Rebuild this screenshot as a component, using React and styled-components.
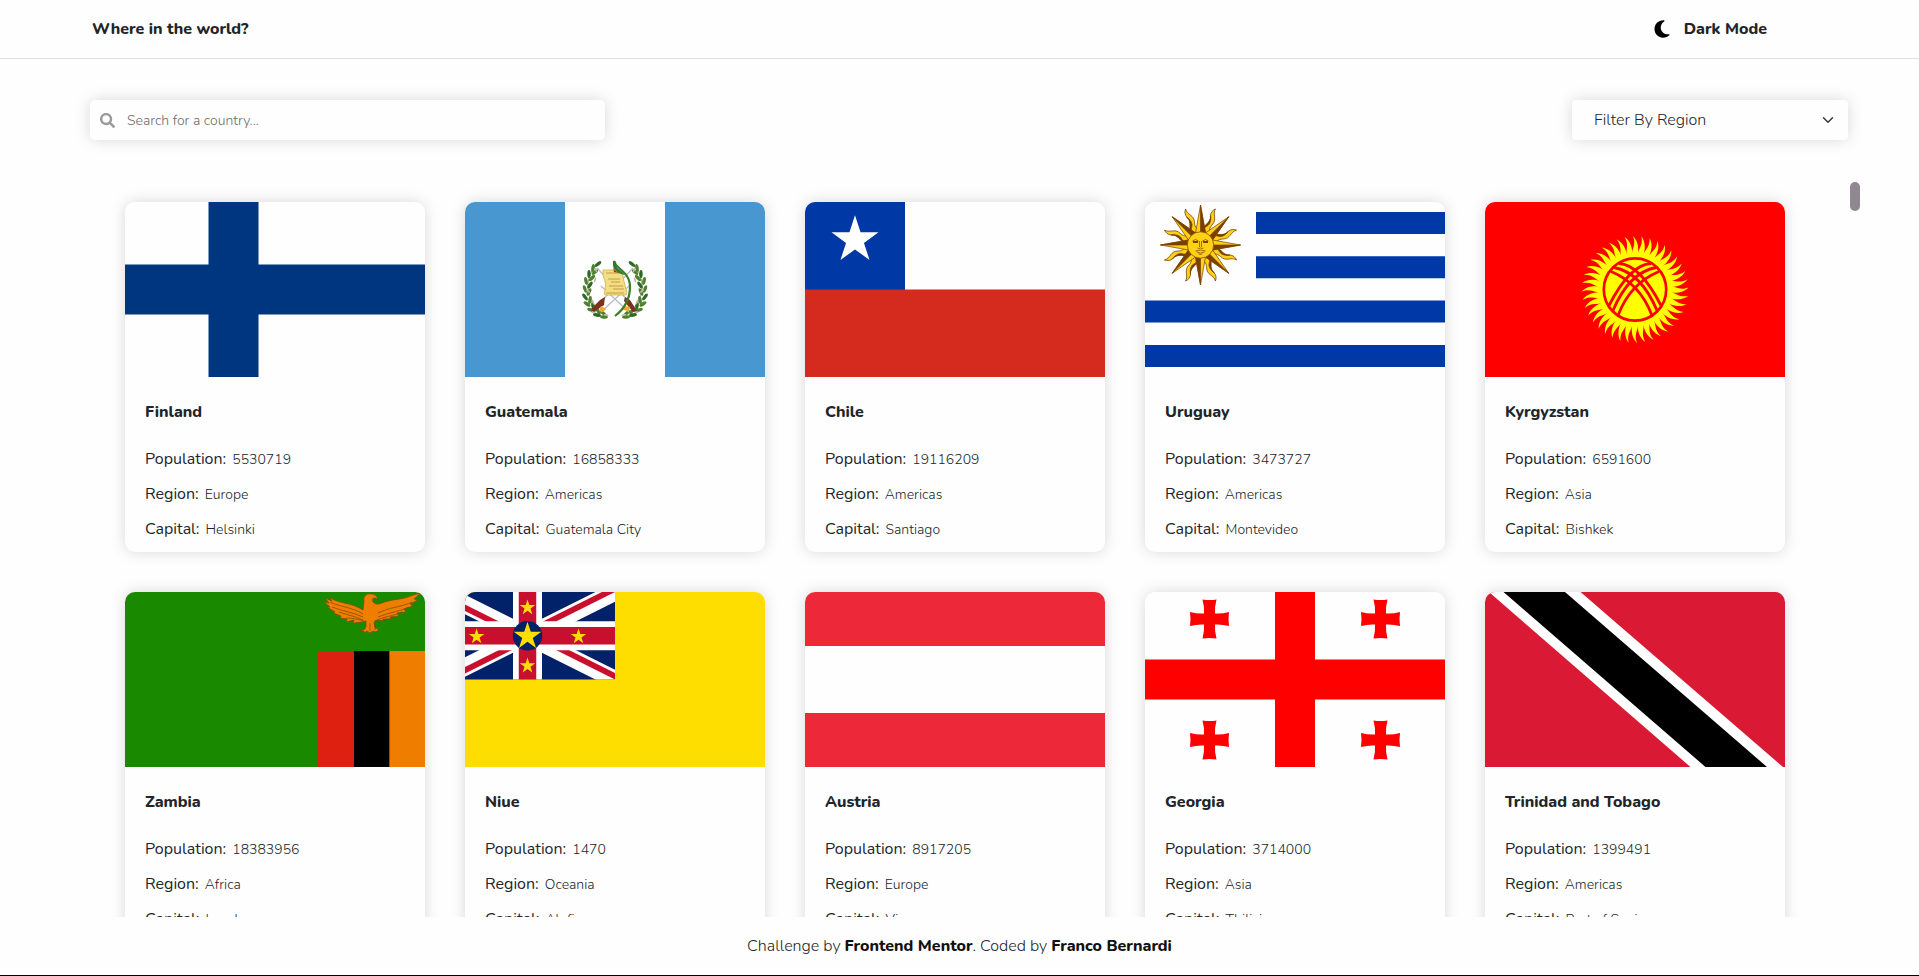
import React from "react";
import styled, { createGlobalStyle } from "styled-components";
import { FaMoon } from "react-icons/fa6";
import { FaSearch } from "react-icons/fa";

const GlobalStyle = createGlobalStyle`
  *, *::before, *::after { box-sizing: border-box; }
  body {
    margin: 0;
    background: #fefefe;
    color: #212529;
    font-family: "Nunito", "Open Sans", sans-serif;
    font-size: 16px;
    font-weight: 300;
  }
  button, input, select { font: inherit; color: inherit; }
`;

const shadow = "0 0 15px rgba(0, 0, 0, 0.15)";

const Page = styled.div`
  display: flex;
  flex-direction: column;
  height: 100vh;
  border-bottom: 1px solid #000;
`;

const Header = styled.header`
  display: flex;
  align-items: center;
  justify-content: space-between;
  height: 59px;
  flex-shrink: 0;
  padding: 0 152px 0 92px;
  border-bottom: 1px solid #dee2e6;
`;

const Brand = styled.h1`
  margin: 0;
  font-size: 16px;
  font-weight: 800;
`;

const ThemeButton = styled.button`
  display: flex;
  align-items: center;
  gap: 12px;
  padding: 0;
  border: 0;
  background: none;
  font-weight: 800;
  cursor: pointer;

  svg { color: #000; }
`;

const Controls = styled.div`
  display: flex;
  justify-content: space-between;
  flex-shrink: 0;
  padding: 41px 71px 42px 90px;
`;

const SearchBox = styled.label`
  display: flex;
  align-items: center;
  gap: 12px;
  width: 515px;
  height: 40px;
  padding: 0 10px;
  border-radius: 5px;
  background: #fefefe;
  box-shadow: ${shadow};
  color: #999;
`;

const SearchInput = styled.input`
  flex: 1;
  min-width: 0;
  padding: 0;
  border: 0;
  outline: 0;
  background: transparent;
  font-size: 14px;
  color: #212529;

  &::placeholder { color: #6c6c6c; opacity: 1; }
`;

const SelectBox = styled.div`
  position: relative;
  width: 276px;

  svg {
    position: absolute;
    top: 14px;
    right: 14px;
    pointer-events: none;
  }
`;

const RegionSelect = styled.select`
  width: 100%;
  height: 40px;
  padding: 0 36px 0 22px;
  border: 0;
  border-radius: 4px;
  appearance: none;
  background: #fefefe;
  box-shadow: ${shadow};
`;

const ScrollArea = styled.main`
  display: flex;
  flex: 1;
  min-height: 0;
  padding: 0 59px 0 60px;
`;

const CardGrid = styled.div`
  display: grid;
  grid-template-columns: repeat(auto-fill, 300px);
  grid-auto-rows: max-content;
  justify-content: center;
  gap: 40px;
  flex: 1;
  padding-top: 20px;
  overflow: hidden;
`;

const ScrollTrack = styled.div`
  width: 10px;
`;

const ScrollThumb = styled.div`
  height: 29px;
  border-radius: 5px;
  background: #8f8891;
`;

const Card = styled.article`
  border-radius: 10px;
  overflow: hidden;
  background: #fefefe;
  box-shadow: ${shadow};
`;

const Flag = styled.svg`
  display: block;
  width: 100%;
  height: 175px;
`;

const CardBody = styled.div`
  padding: 20px 20px 5px;
`;

const CountryName = styled.h2`
  margin: 0 0 15px;
  font-size: 16px;
  line-height: 30px;
  font-weight: 800;
`;

const Facts = styled.dl`
  margin: 0;
`;

const Fact = styled.div`
  display: flex;
  align-items: baseline;
  gap: 6px;
  line-height: 35px;

  dt { font-weight: 400; }
  dd { margin: 0; font-size: 14px; }
`;

const Footer = styled.footer`
  flex-shrink: 0;
  line-height: 58px;
  text-align: center;

  a {
    color: #111;
    font-weight: 800;
    text-decoration: none;
  }
`;

const starPoints = (cx, cy, r) =>
  Array.from({ length: 10 }, (_, i) => {
    const radius = i % 2 ? r * 0.382 : r;
    const a = (i * Math.PI) / 5;
    return `${(cx + radius * Math.sin(a)).toFixed(2)},${(cy - radius * Math.cos(a)).toFixed(2)}`;
  }).join(" ");

const turns = (n, offset = 0) => Array.from({ length: n }, (_, i) => (i * 360) / n + offset);

const Finland = () => (
  <>
    <path fill="#fefefe" d="M0 0h300v175H0z" />
    <path fill="#003580" d="M83.5 0h50v62.5H300v50H133.5V175h-50v-62.5H0v-50h83.5z" />
  </>
);

const laurelLeaves = [
  [-17, -25, 50], [-22, -21, 10], [-20, -17, 50], [-26, -15, 0], [-23, -11, 45],
  [-29, -8, -12], [-25, -4, 35], [-30, 0, -20], [-26, 3, 25], [-30, 8, -38],
  [-25, 11, 10], [-28, 15, -55], [-22, 17, -10], [-24, 21, -70], [-17, 22, -30],
  [-18, 26, -80], [-12, 24, -50], [-11, 28, -85],
];

const Laurel = () => (
  <g>
    <path d="M-17-26C-31-13-32 13-10 26" fill="none" stroke="#9a9b72" strokeWidth="1" />
    {laurelLeaves.map(([x, y, a], i) => (
      <ellipse key={i} rx="1.7" ry="4" fill={i % 3 ? "#4e8030" : "#2f6a25"} transform={`translate(${x} ${y}) rotate(${a})`} />
    ))}
    {laurelLeaves.filter((_, i) => i % 3 === 1).map(([x, y, a], i) => (
      <ellipse key={i} rx="0.9" ry="2.6" fill="#c3bba3" transform={`translate(${x + 3} ${y + 2}) rotate(${a - 30})`} />
    ))}
  </g>
);

const Guatemala = () => (
  <>
    <path fill="#4997d0" d="M0 0h300v175H0z" />
    <path fill="#fefefe" d="M100 0h100v175H100z" />
    <g transform="translate(150 87)">
      <Laurel />
      <g transform="scale(-1 1)"><Laurel /></g>
      <path d="M-18-21L20 19M18-21L-20 19M-14-3L14 23M14-3L-14 23" stroke="#b9bcc4" strokeWidth="1.2" />
      <path d="M-10 8l-5 3-9 9 3 3 10-7zM10 8l5 3 7 11-4 1-9-11z" fill="#7b3320" />
      <path d="M-14 17l5 3-3 3-4-1zM9 17l6 1-1 4-6-1z" fill="#f0a92b" />
      <path d="M-12-19H7q1 10 5 23l-1 2H-10q-2-2 0-4Q-8-5-12-14z" fill="#f3df83" stroke="#cfae4e" strokeWidth="0.8" />
      <path d="M-9-16H5M-7-10H5M-4-7H5M-6-3H8M-2 0H9M-9 4H9" stroke="#c59b45" strokeWidth="1" />
      <path d="M-1-26C5-19 15-15 15-2 15 10 9 20 0 27" fill="none" stroke="#3c7d2a" strokeWidth="2.2" />
      <path d="M-2-28c3-1 4 2 3 5 2 4 6 5 9 9-6-1-12-5-12-10z" fill="#2f7a2c" />
      <path d="M-2-24q0 5 6 8l-5-1z" fill="#a12a1f" />
    </g>
  </>
);

const Chile = () => (
  <>
    <path fill="#fefefe" d="M0 0h300v88H0z" />
    <path fill="#0039a6" d="M0 0h100v88H0z" />
    <path fill="#d52b1e" d="M0 87.5h300V175H0z" />
    <polygon fill="#fff" points={starPoints(50, 38, 24.7)} />
  </>
);

const Uruguay = () => (
  <>
    <path fill="#fefefe" d="M0 0h300v175H0z" />
    <path fill="#0038a8" d="M111 10h189v22H111zM111 54.3h189v22H111zM0 98.5h300v22H0zM0 143h300v22H0z" />
    <g transform="translate(55.5 43)" stroke="#7b3f00" strokeWidth="0.7" strokeLinejoin="round">
      {turns(8, 22.5).map((a) => (
        <g key={a} transform={`rotate(${a})`}>
          <path fill="#fcd116" d="M-4.5-12C-6-19 2-24-2-31c-1-3 0-6 2-8-1 6 6 9 3 16-2 5 1 8 1 11z" />
          <path fill="#7b3f00" d="M-4.5-12C-6-19 2-24-2-31c3 5 3 9 0 12-2 3-1 5 0 7z" />
        </g>
      ))}
      {turns(8).map((a) => (
        <g key={a} transform={`rotate(${a})`}>
          <path fill="#fcd116" d="M-5-12L0-40l5 28z" />
          <path fill="#7b3f00" d="M0-12v-28l5 28z" />
        </g>
      ))}
      <circle r="13.2" fill="#fcd116" />
      <g fill="none">
        <path d="M-8-4q3-3 6 0M8-4q-3-3-6 0M-1-4v6M1-4v6M-3 3q1.5 1 3 0 1.5 1 3 0M-5 6q5-2 10 0M-4 7q4 2 8 0M-2 9q2 1 4 0" />
        <path d="M-7.5-3h5M2.5-3h5" strokeWidth="1.8" />
      </g>
    </g>
  </>
);

const yurtLines = [
  "M-24-18Q5-6 17 26",
  "M-21-22Q6-17 22 21",
  "M-16-26Q5-25 26 16",
];

const Kyrgyzstan = () => (
  <>
    <path fill="#f00" d="M0 0h300v175H0z" />
    <g transform="translate(150 87.5)">
      <g fill="#ff0">
        {turns(40).map((a) => (
          <path key={a} transform={`rotate(${a})`} d="M-2.9-34C-3.5-41 1.5-44-2-53.5 3.5-48 3.8-41 2.9-34z" />
        ))}
        <circle r="37" />
      </g>
      <circle r="31.2" fill="none" stroke="#f00" strokeWidth="2.7" />
      <g fill="none" stroke="#f00" strokeWidth="2.8">
        {yurtLines.map((d) => <path key={d} d={d} />)}
        <g transform="scale(-1 1)">{yurtLines.map((d) => <path key={d} d={d} />)}</g>
      </g>
    </g>
  </>
);

const Zambia = () => (
  <>
    <path fill="#198a00" d="M0 0h300v175H0z" />
    <path fill="#de2010" d="M193 59h36v116h-36z" />
    <path d="M229 59h35.5v116H229z" />
    <path fill="#ef7d00" d="M264.5 59H300v116h-35.5z" />
    <g stroke="#7a4a00" strokeWidth="0.7" strokeLinejoin="round">
      <path
        fill="#ef7d00"
        d="M238 18C226 10 213 12 204 5l3 4-7-3 4 5-5-1 6 5-3 0 8 5-2 1 8 3-1 2 7 1-1 3 8-2-1 3 9-1 4-1 0 5-1 3-5 2 4 0 0 2 3-2 3 2 3-2 3 1 3-3-4-1-1-6 2-2 8 1-1-2 9 0-2-2 9-1-2-3 9-1-2-3 9-3-3-2 8-4-4-1 7-6-8 2c-10 5-22 4-31 8-5 2-7 1-9-1 -1-2-1-4 2-4 1 0 2 1 2 2 1-4-2-6-6-6-5-1-8 3-7 7z"
      />
      <path
        fill="none"
        d="M205 10c10 5 22 5 33 12M207 15c10 4 20 5 31 10M214 20c9 3 15 4 24 8M221 26c5 0 12 1 18 3M287 10c-10 5-22 5-34 11M284 15c-10 5-19 5-31 10M277 20c-8 4-16 4-25 8M270 25c-5 3-11 2-19 5M245 31v8M250 30v8"
      />
    </g>
  </>
);

const Niue = () => (
  <>
    <path fill="#fedd00" d="M0 0h300v175H0z" />
    <clipPath id="canton"><path d="M0 0h150v87.5H0z" /></clipPath>
    <clipPath id="saltire">
      <path d="M62.5 43.75H150V87.5zM62.5 43.75V87.5H-25zM62.5 43.75H-25V0zM62.5 43.75V0H150z" />
    </clipPath>
    <g clipPath="url(#canton)">
      <path fill="#012169" d="M0 0h150v88H0z" />
      <path stroke="#fff" strokeWidth="17.5" d="M-25 0L150 87.5M150 0L-25 87.5" />
      <path stroke="#c8102e" strokeWidth="11.7" clipPath="url(#saltire)" d="M-25 0L150 87.5M150 0L-25 87.5" />
      <path stroke="#fff" strokeWidth="29" d="M62.5 0v88M0 43.75h150" />
      <path stroke="#c8102e" strokeWidth="17.5" d="M62.5 0v88M0 43.75h150" />
      <circle cx="62.5" cy="43.75" r="14.7" fill="#012169" />
      <g fill="#fedd00">
        <polygon points={starPoints(62.5, 44.2, 14.5)} />
        <polygon points={starPoints(62.5, 15.6, 8.2)} />
        <polygon points={starPoints(62.5, 73.8, 8.2)} />
        <polygon points={starPoints(11.6, 44.6, 8.2)} />
        <polygon points={starPoints(113.5, 44.6, 8.2)} />
      </g>
    </g>
  </>
);

const Austria = () => (
  <>
    <path fill="#ed2939" d="M0 0h300v175H0z" />
    <path fill="#fefefe" d="M0 54h300v67H0z" />
  </>
);

const Georgia = () => (
  <>
    <path fill="#fefefe" d="M0 0h300v175H0z" />
    <g fill="#f00">
      <path d="M130 0h40v67.5h130v40H170V175h-40v-67.5H0v-40h130z" />
      {[[64.5, 27], [235.5, 27], [64.5, 148], [235.5, 148]].map(([x, y]) => (
        <path
          key={`${x}-${y}`}
          transform={`translate(${x} ${y})`}
          d="M-7-19.5q7 1 14 0Q5-12 5.500-5.500 12-5 19.500-7q-1 7 0 14Q12 5 5.500 5.500 5 12 7 19.500q-7-1-14 0Q-5 12-5.500 5.500-12 5-19.500 7q1-7 0-14Q-12-5-5.500-5.500-5-12-7-19.500z"
        />
      ))}
    </g>
  </>
);

const Trinidad = () => (
  <>
    <path fill="#da1a35" d="M0 0h300v175H0z" />
    <path fill="#fff" d="M4 0h91.5L298 175h-92.5z" />
    <path d="M18.5 0H80l202 175h-61.5z" />
  </>
);

const countries = [
  { name: "Finland", population: 5530719, region: "Europe", capital: "Helsinki", Art: Finland },
  { name: "Guatemala", population: 16858333, region: "Americas", capital: "Guatemala City", Art: Guatemala },
  { name: "Chile", population: 19116209, region: "Americas", capital: "Santiago", Art: Chile },
  { name: "Uruguay", population: 3473727, region: "Americas", capital: "Montevideo", Art: Uruguay },
  { name: "Kyrgyzstan", population: 6591600, region: "Asia", capital: "Bishkek", Art: Kyrgyzstan },
  { name: "Zambia", population: 18383956, region: "Africa", capital: "Lusaka", Art: Zambia },
  { name: "Niue", population: 1470, region: "Oceania", capital: "Alofi", Art: Niue },
  { name: "Austria", population: 8917205, region: "Europe", capital: "Vienna", Art: Austria },
  { name: "Georgia", population: 3714000, region: "Asia", capital: "Tbilisi", Art: Georgia },
  { name: "Trinidad and Tobago", population: 1399491, region: "Americas", capital: "Port of Spain", Art: Trinidad },
];

const CountryCard = ({ name, population, region, capital, Art }) => (
  <Card>
    <Flag viewBox="0 0 300 175" preserveAspectRatio="xMidYMid slice" role="img" aria-label={`Flag of ${name}`}>
      <Art />
    </Flag>
    <CardBody>
      <CountryName>{name}</CountryName>
      <Facts>
        <Fact><dt>Population:</dt><dd>{population}</dd></Fact>
        <Fact><dt>Region:</dt><dd>{region}</dd></Fact>
        <Fact><dt>Capital:</dt><dd>{capital}</dd></Fact>
      </Facts>
    </CardBody>
  </Card>
);

export default function App() {
  return (
    <Page>
      <GlobalStyle />
      <Header>
        <Brand>Where in the world?</Brand>
        <ThemeButton type="button">
          <FaMoon size={20} aria-hidden="true" />
          Dark Mode
        </ThemeButton>
      </Header>
      <Controls>
        <SearchBox>
          <FaSearch size={15} aria-hidden="true" />
          <SearchInput type="text" placeholder="Search for a country..." aria-label="Search for a country" />
        </SearchBox>
        <SelectBox>
          <RegionSelect aria-label="Filter by region" defaultValue="">
            <option value="">Filter By Region</option>
            <option>Africa</option>
            <option>Americas</option>
            <option>Asia</option>
            <option>Europe</option>
            <option>Oceania</option>
          </RegionSelect>
          <svg width="12" height="12" viewBox="0 0 16 16" aria-hidden="true">
            <path d="M2 5l6 6 6-6" fill="none" stroke="#343a40" strokeWidth="2" strokeLinecap="round" strokeLinejoin="round" />
          </svg>
        </SelectBox>
      </Controls>
      <ScrollArea>
        <CardGrid>
          {countries.map((country) => <CountryCard key={country.name} {...country} />)}
        </CardGrid>
        <ScrollTrack aria-hidden="true"><ScrollThumb /></ScrollTrack>
      </ScrollArea>
      <Footer>
        Challenge by <a href="#frontend-mentor">Frontend Mentor</a>. Coded by <a href="#franco-bernardi">Franco Bernardi</a>
      </Footer>
    </Page>
  );
}
